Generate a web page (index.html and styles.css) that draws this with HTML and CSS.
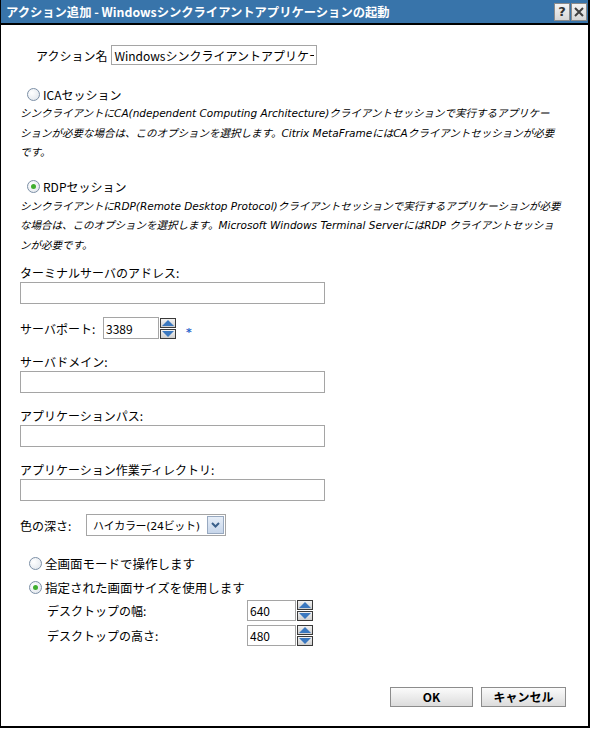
FILE: index.html
```html
<!DOCTYPE html>
<html>
<head>
    <meta charset="UTF-8">
    <title>アクション追加</title>
    <link rel="stylesheet" href="styles.css">
</head>
<body>
    <div class="dialog">
        <div class="titlebar">
            <span class="title">アクション追加 - Windowsシンクライアントアプリケーションの起動</span>
            <span class="title-buttons">
                <span class="title-btn">?</span>
                <span class="title-btn">
                    <svg width="10" height="10" viewBox="0 0 10 10"><path d="M1 1 L9 9 M9 1 L1 9" stroke="#404040" stroke-width="2"/></svg>
                </span>
            </span>
        </div>

        <div class="content">
            <div class="name-row">
                <label>アクション名</label>
                <input type="text" class="text-input name-input" value="Windowsシンクライアントアプリケーションの起動">
            </div>

            <div class="radio-row session-ica">
                <span class="radio"></span>
                <span>ICAセッション</span>
            </div>
            <div class="desc">
                <div>シンクライアントにCA(ndependent Computing Architecture)クライアントセッションで実行するアプリケー</div>
                <div>ションが必要な場合は、このオプションを選択します。Citrix MetaFrameにはCAクライアントセッションが必要</div>
                <div>です。</div>
            </div>

            <div class="radio-row session-rdp">
                <span class="radio checked"></span>
                <span>RDPセッション</span>
            </div>
            <div class="desc">
                <div>シンクライアントにRDP(Remote Desktop Protocol)クライアントセッションで実行するアプリケーションが必要</div>
                <div>な場合は、このオプションを選択します。Microsoft Windows Terminal ServerにはRDP クライアントセッショ</div>
                <div>ンが必要です。</div>
            </div>

            <div class="field first-field">
                <label>ターミナルサーバのアドレス:</label>
                <input type="text" class="text-input wide-input">
            </div>

            <div class="inline-row port-row">
                <label>サーバポート:</label>
                <input type="text" class="text-input port-input" value="3389">
                <span class="spinner">
                    <span class="spin-btn"><svg width="12" height="6" viewBox="0 0 12 6"><path d="M0 6 L6 0 L12 6 Z" fill="#3b78bf"/></svg></span>
                    <span class="spin-btn"><svg width="12" height="6" viewBox="0 0 12 6"><path d="M0 0 L6 6 L12 0 Z" fill="#3b78bf"/></svg></span>
                </span>
                <span class="required">*</span>
            </div>

            <div class="field">
                <label>サーバドメイン:</label>
                <input type="text" class="text-input wide-input">
            </div>

            <div class="field">
                <label>アプリケーションパス:</label>
                <input type="text" class="text-input wide-input">
            </div>

            <div class="field">
                <label>アプリケーション作業ディレクトリ:</label>
                <input type="text" class="text-input wide-input">
            </div>

            <div class="inline-row color-row">
                <label>色の深さ:</label>
                <div class="select">
                    <span class="select-text">ハイカラー(24ビット)</span>
                    <span class="select-btn">
                        <svg width="9" height="6" viewBox="0 0 9 6"><path d="M1 1 L4.5 4.5 L8 1" stroke="#3a5f8a" stroke-width="2" fill="none"/></svg>
                    </span>
                </div>
            </div>

            <div class="radio-row screen-full">
                <span class="radio"></span>
                <span>全画面モードで操作します</span>
            </div>
            <div class="radio-row screen-size">
                <span class="radio checked"></span>
                <span>指定された画面サイズを使用します</span>
            </div>

            <div class="size-row">
                <label>デスクトップの幅:</label>
                <input type="text" class="text-input size-input" value="640">
                <span class="spinner">
                    <span class="spin-btn"><svg width="12" height="6" viewBox="0 0 12 6"><path d="M0 6 L6 0 L12 6 Z" fill="#3b78bf"/></svg></span>
                    <span class="spin-btn"><svg width="12" height="6" viewBox="0 0 12 6"><path d="M0 0 L6 6 L12 0 Z" fill="#3b78bf"/></svg></span>
                </span>
            </div>
            <div class="size-row">
                <label>デスクトップの高さ:</label>
                <input type="text" class="text-input size-input" value="480">
                <span class="spinner">
                    <span class="spin-btn"><svg width="12" height="6" viewBox="0 0 12 6"><path d="M0 6 L6 0 L12 6 Z" fill="#3b78bf"/></svg></span>
                    <span class="spin-btn"><svg width="12" height="6" viewBox="0 0 12 6"><path d="M0 0 L6 6 L12 0 Z" fill="#3b78bf"/></svg></span>
                </span>
            </div>
        </div>

        <div class="footer">
            <button type="button" class="btn ok-btn">OK</button>
            <button type="button" class="btn cancel-btn">キャンセル</button>
        </div>
    </div>
</body>
</html>
```

FILE: styles.css
```css
body {
    margin: 0;
    padding: 0;
    background: #fff;
    font-family: "Noto Sans CJK JP", "DejaVu Sans", sans-serif;
    font-size: 12px;
    color: #000;
}
.dialog {
    width: 590px;
    height: 728px;
    box-sizing: border-box;
    border-left: 1px solid #000;
    border-right: 2px solid #000;
    border-bottom: 2px solid #000;
    background: #fff;
    display: flex;
    flex-direction: column;
}
.titlebar {
    height: 23px;
    background: #3874aa;
    border-bottom: 2px solid #000;
    display: flex;
    align-items: center;
    justify-content: space-between;
    padding: 0 1px 0 5px;
}
.title {
    color: #fff;
    font-weight: bold;
    font-size: 12.3px;
    white-space: nowrap;
}
.title-buttons {
    display: flex;
    gap: 1px;
}
.title-btn {
    width: 14px;
    height: 16px;
    background: linear-gradient(#f4f4f4, #d6d6d6);
    border: 1px solid #8a8a8a;
    display: flex;
    align-items: center;
    justify-content: center;
    font-family: "DejaVu Sans", sans-serif;
    font-weight: bold;
    font-size: 13px;
    color: #303030;
}
.content {
    padding-left: 19px;
    flex: 1;
}
.name-row {
    margin-top: 20px;
    margin-left: 16px;
    display: flex;
    align-items: center;
    gap: 4px;
}
.text-input {
    box-sizing: border-box;
    height: 22px;
    border: 1px solid #a5a5a5;
    padding: 0 2px;
    margin: 0;
    font-family: "Noto Sans CJK JP", "DejaVu Sans", sans-serif;
    font-size: 12px;
    color: #000;
    background: #fff;
    outline: none;
}
.name-input {
    width: 206px;
    height: 20px;
}
.radio-row {
    display: flex;
    align-items: center;
    gap: 3px;
    height: 16px;
}
.session-ica {
    margin-top: 21px;
    margin-left: 7px;
}
.session-rdp {
    margin-top: 16px;
    margin-left: 7px;
}
.radio {
    width: 11px;
    height: 11px;
    border-radius: 50%;
    border: 1px solid #7c8fa6;
    background: radial-gradient(circle at 35% 35%, #fff, #dde3ea);
    position: relative;
}
.radio.checked::after {
    content: "";
    position: absolute;
    left: 3px;
    top: 3px;
    width: 5px;
    height: 5px;
    border-radius: 50%;
    background: #3fae2e;
}
.desc {
    margin-top: 2px;
    font-family: "DejaVu Sans", "Noto Sans CJK JP", sans-serif;
    font-style: italic;
    font-size: 10.5px;
    line-height: 19.5px;
    white-space: nowrap;
}
.field {
    margin-top: 15px;
}
.first-field {
    margin-top: 10px;
}
.field label {
    display: block;
    line-height: 16px;
    margin-bottom: 1px;
}
.wide-input {
    width: 305px;
}
.inline-row {
    margin-top: 13px;
    display: flex;
    align-items: center;
}
.port-row label {
    width: 83px;
}
.port-input {
    width: 56px;
}
.spinner {
    display: flex;
    flex-direction: column;
    gap: 1px;
    margin-left: 1px;
}
.spin-btn {
    width: 14px;
    height: 8px;
    border: 1px solid #3a3a3a;
    background: linear-gradient(#f2f2f2, #cfcfcf);
    display: flex;
    align-items: center;
    justify-content: center;
}
.required {
    color: #2a66cc;
    margin-left: 10px;
    margin-top: 9px;
    font-family: "DejaVu Sans", sans-serif;
    font-size: 11px;
    font-weight: bold;
}
.color-row label {
    width: 66px;
}
.select {
    box-sizing: border-box;
    width: 140px;
    height: 22px;
    border: 1px solid #a5a5a5;
    display: flex;
    align-items: center;
    justify-content: space-between;
    padding: 0 1px 0 6px;
}
.select-text {
    white-space: nowrap;
    font-family: "DejaVu Sans", "Noto Sans CJK JP", sans-serif;
    font-size: 11px;
    letter-spacing: -0.3px;
}
.select-btn {
    width: 17px;
    height: 18px;
    box-sizing: border-box;
    border: 1px solid #98a9c0;
    background: linear-gradient(#e6eef8, #c7d6ea);
    display: flex;
    align-items: center;
    justify-content: center;
}
.screen-full {
    margin-top: 19px;
    margin-left: 9px;
    font-size: 12.5px;
}
.screen-size {
    margin-top: 8px;
    margin-left: 9px;
    font-size: 12.5px;
}
.size-row {
    margin-top: 5px;
    margin-left: 27px;
    display: flex;
    align-items: center;
}
.size-row + .size-row {
    margin-top: 4px;
}
.size-row label {
    width: 200px;
}
.size-input {
    width: 49px;
    height: 21px;
}
.footer {
    display: flex;
    justify-content: flex-end;
    gap: 8px;
    padding: 0 22px 19px 0;
}
.btn {
    height: 20px;
    border: 1px solid #8c8c8c;
    background: linear-gradient(#fbfbfb, #dcdcdc);
    font-family: "Noto Sans CJK JP", "DejaVu Sans", sans-serif;
    font-weight: bold;
    font-size: 12px;
    padding: 0;
    line-height: 18px;
}
.ok-btn {
    width: 83px;
}
.cancel-btn {
    width: 85px;
}
```
